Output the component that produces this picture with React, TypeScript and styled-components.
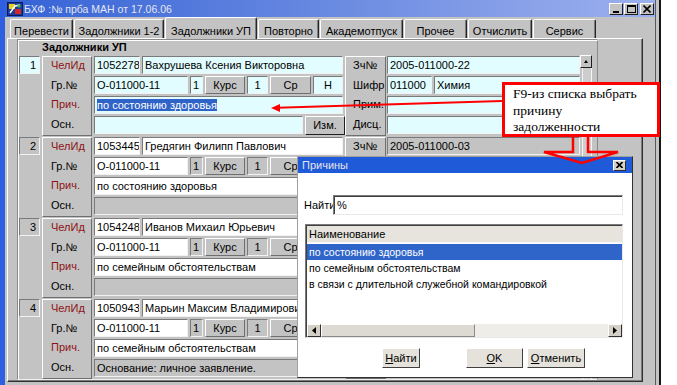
import React from "react";
import styled, { createGlobalStyle, css } from "styled-components";

const GlobalStyle = createGlobalStyle`
  * { box-sizing: border-box; }
  html, body { margin: 0; padding: 0; background: #ffffff; }
  body { font-family: "Liberation Sans", Arial, sans-serif; font-size: 11px; color: #000; }
`;

const FACE = "#c3c3c3";

const raised = css`
  border-style: solid;
  border-width: 1px;
  border-color: #ffffff #6f6f6f #6f6f6f #ffffff;
`;
const sunken = css`
  border-style: solid;
  border-width: 1px;
  border-color: #7a7a7a #f2f2f2 #f2f2f2 #7a7a7a;
`;

type Tone = "cyan" | "white" | "grey";
const toneBg: Record<Tone, string> = { cyan: "#e2fdff", white: "#ffffff", grey: FACE };

const Screen = styled.div`
  position: relative;
  width: 677px;
  height: 385px;
  overflow: hidden;
  background: #ffffff;
`;

const Window = styled.div`
  width: 656px;
  height: 385px;
  background: ${FACE};
  border-left: 5px solid #2d5fe0;
  border-right: 1px solid #5a5a5a;
  box-shadow: 3px 0 0 ${FACE}, 5px 0 0 #161616;
  display: flex;
  flex-direction: column;
`;

const TitleBar = styled.div`
  height: 17px;
  flex: none;
  display: flex;
  align-items: center;
  padding: 1px 1px 0 2px;
  background: linear-gradient(to right, #3462d6, #6f8ee2 55%, #9db0ee);
  color: #e3e6f2;
  font-size: 10.5px;
`;

const TitleText = styled.span`
  margin-left: 1px;
  white-space: nowrap;
`;

const WinButtons = styled.div`
  margin-left: auto;
  display: flex;
  gap: 1px;
`;

const WinButton = styled.div<{ $gapLeft?: number }>`
  width: 14px;
  height: 12px;
  margin-left: ${(p) => p.$gapLeft ?? 0}px;
  background: ${FACE};
  ${raised};
  border-right-color: #202020;
  border-bottom-color: #202020;
  display: flex;
  align-items: center;
  justify-content: center;
`;

const TabStrip = styled.div`
  height: 21px;
  flex: none;
  display: flex;
  align-items: flex-end;
  gap: 1px;
  padding-left: 5px;
`;

const Tab = styled.div<{ $w: number; $active?: boolean }>`
  width: ${(p) => p.$w}px;
  height: ${(p) => (p.$active ? 22 : 19)}px;
  margin-bottom: ${(p) => (p.$active ? -1 : 0)}px;
  position: relative;
  z-index: ${(p) => (p.$active ? 2 : 1)};
  background: ${FACE};
  border-style: solid;
  border-width: 1px 1px 0 1px;
  border-color: #ffffff #262626 transparent #ffffff;
  border-radius: 2px 2px 0 0;
  box-shadow: inset -1px 0 0 #7b7b7b;
  display: flex;
  justify-content: center;
  padding-top: ${(p) => (p.$active ? 7 : 5)}px;
  font-size: 11px;
  line-height: 13px;
  white-space: nowrap;
`;

const Panel = styled.div`
  flex: 1;
  width: 636px;
  margin: 0 0 4px 2px;
  background: ${FACE};
  border-style: solid;
  border-width: 1px;
  border-color: #ffffff #303030 #303030 #ffffff;
  box-shadow: inset -1px -1px 0 #7b7b7b;
  padding: 1px 0 0 10px;
  display: flex;
  flex-direction: column;
`;

const InnerFrame = styled.div`
  width: 580px;
  flex: 1;
  margin-bottom: 1px;
  border: 1px solid #ffffff;
  border-right-color: #8a8a8a;
  border-bottom-color: #f0f0f0;
  box-shadow: -1px -1px 0 #8a8a8a;
  display: flex;
  flex-direction: column;
`;

const Heading = styled.div`
  height: 15px;
  flex: none;
  padding-left: 23px;
  font-weight: bold;
  line-height: 13px;
`;

const RecordsArea = styled.div`
  display: flex;
  flex: 1;
`;

const RecordList = styled.div`
  width: 561px;
  display: flex;
  flex-direction: column;
  gap: 1px;
`;

const VScroll = styled.div`
  width: 14px;
  display: flex;
  flex-direction: column;
  margin-top: -1px;
`;

const VScrollBtn = styled.div`
  width: 12px;
  height: 13px;
  background: ${FACE};
  ${raised};
  border-right-color: #202020;
  border-bottom-color: #202020;
  display: flex;
  align-items: center;
  justify-content: center;
`;

const VScrollTrack = styled.div`
  flex: 1;
  margin: 0 2px 0 2px;
  border-left: 1px solid #f4f4f4;
  border-right: 1px solid #f4f4f4;
  background: #cdcdcd;
`;

const RecordRow = styled.div`
  display: flex;
  height: 80px;
`;

const NumberBox = styled.div<{ $current?: boolean }>`
  width: 21px;
  height: 18px;
  margin-right: 2px;
  ${sunken};
  background: ${(p) => (p.$current ? toneBg.cyan : FACE)};
  text-align: right;
  padding-right: 3px;
  line-height: 16px;
`;

const LabelCol = styled.div<{ $w: number; $pad: number }>`
  width: ${(p) => p.$w}px;
  height: 80px;
  ${raised};
  display: flex;
  flex-direction: column;
  padding-left: ${(p) => p.$pad}px;
`;

const LabelCell = styled.div<{ $red?: boolean }>`
  height: 20px;
  line-height: 16px;
  color: ${(p) => (p.$red ? "#8e1414" : "#000")};
  white-space: nowrap;
`;

const FieldCol = styled.div<{ $w: number; $pad: number }>`
  width: ${(p) => p.$w}px;
  padding-left: ${(p) => p.$pad}px;
  display: flex;
  flex-direction: column;
`;

const FieldRow = styled.div`
  height: 20px;
  display: flex;
  align-items: flex-start;
  gap: 2px;
`;

const Field = styled.div<{ $w: number; $tone: Tone; $center?: boolean }>`
  width: ${(p) => p.$w}px;
  height: 18px;
  flex: none;
  ${sunken};
  background: ${(p) => toneBg[p.$tone]};
  padding: 0 2px;
  line-height: 16px;
  text-align: ${(p) => (p.$center ? "center" : "left")};
  white-space: nowrap;
  overflow: hidden;
`;

const Selected = styled.span`
  background: #2f63c8;
  color: #ffffff;
`;

const CapBox = styled.div<{ $w: number }>`
  width: ${(p) => p.$w}px;
  height: 18px;
  flex: none;
  ${raised};
  text-align: center;
  line-height: 16px;
`;

const SmallButton = styled.div<{ $w: number }>`
  width: ${(p) => p.$w}px;
  height: 19px;
  flex: none;
  background: ${FACE};
  ${raised};
  border-right-color: #202020;
  border-bottom-color: #202020;
  text-align: center;
  line-height: 17px;
`;

/* ---------- dialog ---------- */

const Dialog = styled.div`
  position: absolute;
  left: 297px;
  top: 156px;
  width: 336px;
  height: 222px;
  z-index: 5;
  background: #ffffff;
  border: 1px solid #a0a0a0;
  border-right-color: #303030;
  border-bottom-color: #303030;
  display: flex;
  flex-direction: column;
  font-size: 10.5px;
`;

const DialogTitle = styled.div`
  height: 16px;
  flex: none;
  background: #1f5bd9;
  color: #e4e4ea;
  display: flex;
  align-items: center;
  justify-content: space-between;
  padding: 0 6px 0 4px;
  font-size: 11px;
`;

const CloseButton = styled.div`
  width: 13px;
  height: 11px;
  background: #d4d0c8;
  ${raised};
  border-right-color: #303030;
  border-bottom-color: #303030;
  display: flex;
  align-items: center;
  justify-content: center;
`;

const DialogBody = styled.div`
  flex: 1;
  display: flex;
  flex-direction: column;
  padding: 22px 9px 0 6px;
`;

const SearchRow = styled.div`
  display: flex;
  align-items: center;
  height: 20px;
`;

const SearchLabel = styled.div`
  width: 29px;
  font-size: 11px;
`;

const SearchInput = styled.div`
  flex: 1;
  height: 20px;
  border-style: solid;
  border-width: 1px;
  border-color: #7a7a7a #e8e8e8 #e8e8e8 #7a7a7a;
  box-shadow: inset 1px 1px 0 #404040;
  padding-left: 3px;
  line-height: 18px;
  font-size: 11px;
`;

const ListBox = styled.div`
  margin: 9px 0 0 1px;
  height: 114px;
  border-style: solid;
  border-width: 1px;
  border-color: #7a7a7a #e8e8e8 #e8e8e8 #7a7a7a;
  box-shadow: inset 1px 1px 0 #404040;
  padding: 1px 0 0 1px;
  background: #ffffff;
  display: flex;
  flex-direction: column;
`;

const ListHeader = styled.div`
  height: 17px;
  flex: none;
  background: #e6e4dc;
  border-bottom: 1px solid #f6f6f6;
  padding-left: 2px;
  line-height: 17px;
  font-size: 11px;
`;

const ListItem = styled.div<{ $selected?: boolean }>`
  height: 16px;
  flex: none;
  padding-left: 2px;
  line-height: 16px;
  white-space: nowrap;
  background: ${(p) => (p.$selected ? "#2f64c9" : "transparent")};
  color: ${(p) => (p.$selected ? "#ffffff" : "#000")};
`;

const ListItems = styled.div`
  flex: 1;
  padding-top: 1px;
  display: flex;
  flex-direction: column;
`;

const HScroll = styled.div`
  height: 13px;
  flex: none;
  display: flex;
`;

const ArrowBtn = styled.div`
  width: 14px;
  height: 13px;
  background: #d4d0c8;
  ${raised};
  border-right-color: #303030;
  border-bottom-color: #303030;
  display: flex;
  align-items: center;
  justify-content: center;
`;

const HThumb = styled.div`
  width: 154px;
  background: #dcdad2;
  ${raised};
  border-right-color: #8a8a8a;
  border-bottom-color: #8a8a8a;
`;

const HTrack = styled.div`
  flex: 1;
  background: #eeede8;
`;

const ButtonRow = styled.div`
  display: flex;
  margin-top: 10px;
  padding-left: 78px;
`;

const DlgButton = styled.div<{ $w: number; $ml: number }>`
  width: ${(p) => p.$w}px;
  height: 20px;
  margin-left: ${(p) => p.$ml}px;
  background: #e4e2da;
  ${raised};
  border-right-color: #404040;
  border-bottom-color: #404040;
  text-align: center;
  line-height: 18px;
  font-size: 11px;
`;

/* ---------- callout ---------- */

const Callout = styled.div`
  position: absolute;
  left: 502px;
  top: 82px;
  width: 158px;
  height: 55px;
  z-index: 6;
  background: #ffffff;
  border: 3px solid #ff0000;
  padding: 1px 0 0 8px;
  font-family: "Liberation Serif", "Times New Roman", serif;
  font-size: 13.5px;
  line-height: 16.5px;
  color: #000;
`;

const Overlay = styled.svg`
  position: absolute;
  left: 0;
  top: 0;
  z-index: 7;
  pointer-events: none;
`;

/* ---------- data ---------- */

type Rec = {
  n: number;
  current?: boolean;
  /** number of rows of the right-hand part that are not under the dialog */
  shownRight: number;
  id: string;
  name: string;
  group: string;
  one: string;
  kurs: string;
  sr: string;
  prich: string;
  osn: string;
  zch: string;
  shifr: string;
  spec: string;
};

const records: Rec[] = [
  {
    n: 1,
    current: true,
    shownRight: 4,
    id: "1052278",
    name: "Вахрушева Ксения Викторовна",
    group: "О-011000-11",
    one: "1",
    kurs: "1",
    sr: "Н",
    prich: "по состоянию здоровья",
    osn: "",
    zch: "2005-011000-22",
    shifr: "011000",
    spec: "Химия",
  },
  {
    n: 2,
    shownRight: 1,
    id: "1053445",
    name: "Гредягин Филипп Павлович",
    group: "О-011000-11",
    one: "1",
    kurs: "1",
    sr: "",
    prich: "по состоянию здоровья",
    osn: "",
    zch: "2005-011000-03",
    shifr: "",
    spec: "",
  },
  {
    n: 3,
    shownRight: 0,
    id: "1054248",
    name: "Иванов Михаил Юрьевич",
    group: "О-011000-11",
    one: "1",
    kurs: "1",
    sr: "",
    prich: "по семейным обстоятельствам",
    osn: "",
    zch: "",
    shifr: "",
    spec: "",
  },
  {
    n: 4,
    shownRight: 0,
    id: "1050943",
    name: "Марьин Максим Владимирович",
    group: "О-011000-11",
    one: "1",
    kurs: "1",
    sr: "",
    prich: "по семейным обстоятельствам",
    osn: "Основание: личное заявление.",
    zch: "",
    shifr: "",
    spec: "",
  },
];

const rightLabels = ["Зч№", "Шифр", "Прим.", "Дисц."];

const tabs = [
  { t: "Перевести", w: 63 },
  { t: "Задолжники 1-2", w: 90 },
  { t: "Задолжники УП", w: 92, active: true },
  { t: "Повторно", w: 61 },
  { t: "Академотпуск", w: 83 },
  { t: "Прочее", w: 63 },
  { t: "Отчислить", w: 64 },
  { t: "Сервис", w: 63 },
];

const AppIcon = () => (
  <svg width="16" height="14" viewBox="0 0 16 14">
    <rect x="0.5" y="0.5" width="15" height="13" fill="#1c3c9c" stroke="#0a1a5a" />
    <rect x="2" y="2" width="6" height="5" fill="#e8d020" />
    <rect x="8" y="7" width="6" height="5" fill="#d02828" />
    <path d="M3 11 L8 4 L13 3" stroke="#ffffff" strokeWidth="1.4" fill="none" />
    <circle cx="12" cy="4" r="1.6" fill="#40c040" />
  </svg>
);

function RecordBlock({ r }: { r: Rec }) {
  const c = !!r.current;
  const t = (cur: Tone, other: Tone): Tone => (c ? cur : other);
  return (
    <RecordRow>
      <NumberBox $current={c}>{r.n}</NumberBox>
      <LabelCol $w={50} $pad={8}>
        <LabelCell $red>ЧелИд</LabelCell>
        <LabelCell>Гр.№</LabelCell>
        <LabelCell $red>Прич.</LabelCell>
        <LabelCell>Осн.</LabelCell>
      </LabelCol>
      <FieldCol $w={253} $pad={2}>
        <FieldRow>
          <Field $w={46} $tone={t("cyan", "white")}>{r.id}</Field>
          <Field $w={201} $tone={t("cyan", "white")}>{r.name}</Field>
        </FieldRow>
        <FieldRow>
          <Field $w={94} $tone={t("cyan", "white")}>{r.group}</Field>
          <Field $w={13} $tone={t("cyan", "grey")}>{r.one}</Field>
          <CapBox $w={40}>Курс</CapBox>
          <Field $w={21} $tone={t("cyan", "grey")} $center>
            {r.kurs}
          </Field>
          <CapBox $w={41}>Ср</CapBox>
          <Field $w={30} $tone={t("cyan", "grey")} $center>
            {r.sr}
          </Field>
        </FieldRow>
        <FieldRow>
          <Field $w={249} $tone={t("cyan", "white")}>
            {c ? <Selected>{r.prich}</Selected> : r.prich}
          </Field>
        </FieldRow>
        <FieldRow>
          {c ? (
            <>
              <Field $w={209} $tone="cyan">{r.osn}</Field>
              <SmallButton $w={40}>Изм.</SmallButton>
            </>
          ) : (
            <Field $w={251} $tone="grey">{r.osn}</Field>
          )}
        </FieldRow>
      </FieldCol>
      <LabelCol $w={41} $pad={7}>
        {rightLabels.map((l, i) => (
          <LabelCell key={l}>{i < r.shownRight ? l : ""}</LabelCell>
        ))}
      </LabelCol>
      <FieldCol $w={194} $pad={1}>
        <FieldRow>
          <Field $w={193} $tone={t("cyan", "grey")}>{r.zch}</Field>
        </FieldRow>
        <FieldRow>
          <Field $w={45} $tone={t("cyan", "grey")}>{r.shifr}</Field>
          <Field $w={146} $tone={t("cyan", "grey")}>{r.spec}</Field>
        </FieldRow>
        <FieldRow>
          <Field $w={193} $tone={t("cyan", "white")} />
        </FieldRow>
        <FieldRow>
          <Field $w={193} $tone={t("cyan", "white")} />
        </FieldRow>
      </FieldCol>
    </RecordRow>
  );
}

export default function App() {
  return (
    <>
      <GlobalStyle />
      <Screen>
        <Window>
          <TitleBar>
            <AppIcon />
            <TitleText>БХФ :№ прба МАН от 17.06.06</TitleText>
            <WinButtons>
              <WinButton>
                <svg width="8" height="8" viewBox="0 0 8 8">
                  <rect x="1" y="6" width="6" height="2" fill="#000" />
                </svg>
              </WinButton>
              <WinButton>
                <svg width="9" height="8" viewBox="0 0 9 8">
                  <rect x="0.5" y="0.5" width="8" height="7" fill="none" stroke="#000" />
                  <rect x="0" y="0" width="9" height="2" fill="#000" />
                </svg>
              </WinButton>
              <WinButton $gapLeft={1}>
                <svg width="8" height="8" viewBox="0 0 8 8">
                  <path d="M0.5 0.5 L7.5 7.5 M7.5 0.5 L0.5 7.5" stroke="#000" strokeWidth="1.6" />
                </svg>
              </WinButton>
            </WinButtons>
          </TitleBar>
          <TabStrip>
            {tabs.map((tb) => (
              <Tab key={tb.t} $w={tb.w} $active={tb.active}>
                {tb.t}
              </Tab>
            ))}
          </TabStrip>
          <Panel>
            <InnerFrame>
              <Heading>Задолжники УП</Heading>
              <RecordsArea>
                <RecordList>
                  {records.map((r) => (
                    <RecordBlock key={r.n} r={r} />
                  ))}
                </RecordList>
                <VScroll>
                  <VScrollBtn>
                    <svg width="4" height="3" viewBox="0 0 4 3">
                      <path d="M0 3 L2 0 L4 3 Z" fill="#000" />
                    </svg>
                  </VScrollBtn>
                  <VScrollTrack />
                </VScroll>
              </RecordsArea>
            </InnerFrame>
          </Panel>
        </Window>

        <Callout>
          F9-из списка выбрать
          <br />
          причину
          <br />
          задолженности
        </Callout>

        <Dialog>
          <DialogTitle>
            <span>Причины</span>
            <CloseButton>
              <svg width="7" height="6" viewBox="0 0 7 6">
                <path d="M0.5 0 L6.5 6 M6.5 0 L0.5 6" stroke="#000" strokeWidth="1.6" />
              </svg>
            </CloseButton>
          </DialogTitle>
          <DialogBody>
            <SearchRow>
              <SearchLabel>Найти</SearchLabel>
              <SearchInput>%</SearchInput>
            </SearchRow>
            <ListBox>
              <ListHeader>Наименование</ListHeader>
              <ListItems>
                <ListItem $selected>по состоянию здоровья</ListItem>
                <ListItem>по семейным обстоятельствам</ListItem>
                <ListItem>в связи с длительной служебной командировкой</ListItem>
              </ListItems>
              <HScroll>
                <ArrowBtn>
                  <svg width="4" height="7" viewBox="0 0 4 7">
                    <path d="M4 0 L0 3.5 L4 7 Z" fill="#000" />
                  </svg>
                </ArrowBtn>
                <HThumb />
                <HTrack />
                <ArrowBtn>
                  <svg width="4" height="7" viewBox="0 0 4 7">
                    <path d="M0 0 L4 3.5 L0 7 Z" fill="#000" />
                  </svg>
                </ArrowBtn>
              </HScroll>
            </ListBox>
            <ButtonRow>
              <DlgButton $w={38} $ml={0}>
                <u>Н</u>айти
              </DlgButton>
              <DlgButton $w={57} $ml={46}>
                <u>O</u>K
              </DlgButton>
              <DlgButton $w={58} $ml={4}>
                <u>О</u>тменить
              </DlgButton>
            </ButtonRow>
          </DialogBody>
        </Dialog>

        <Overlay width={677} height={385} viewBox="0 0 677 385">
          <line x1="502" y1="101" x2="277" y2="107.8" stroke="#ff0000" strokeWidth="2" />
          <polygon points="271,108 280,104 280,112" fill="#ff0000" />
          <polyline
            points="573,137 573,152 544,152 582,163 618,152 588,152 588,137"
            fill="none"
            stroke="#ff0000"
            strokeWidth="2.5"
            strokeLinejoin="miter"
          />
        </Overlay>
      </Screen>
    </>
  );
}
